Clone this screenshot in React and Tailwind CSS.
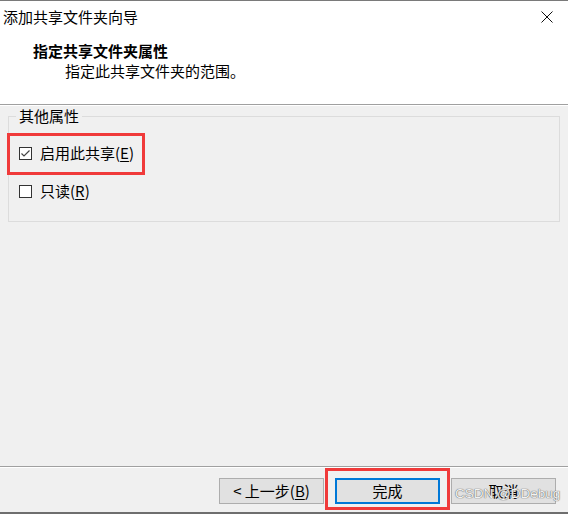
import React from 'react'

const FONT = "font-['Noto_Sans_CJK_SC','Liberation_Sans',sans-serif]"

function Mnemonic({ children, k }) {
  return (
    <span>
      {children}(<span className="underline underline-offset-2">{k}</span>)
    </span>
  )
}

function CheckRow({ checked, label, k }) {
  return (
    <div className="flex items-center h-[20px] pl-[10px]">
      <div className="w-[13px] h-[13px] border border-[#333] bg-white flex items-center justify-center">
        {checked && (
          <svg width="11" height="11" viewBox="0 0 11 11">
            <polyline points="1.5,5.5 4,8 9.5,2.5" fill="none" stroke="#444" strokeWidth="1.2" />
          </svg>
        )}
      </div>
      <span className="ml-[8px] text-[15px] leading-[20px] text-black">
        <Mnemonic k={k}>{label}</Mnemonic>
      </span>
    </div>
  )
}

function Btn({ children, primary }) {
  return (
    <div
      className={
        'w-[105px] h-[26px] flex items-center justify-center text-[15px] text-black bg-[#e1e1e1] ' +
        (primary ? 'border-2 border-[#0078d7]' : 'border border-[#adadad]')
      }
    >
      {children}
    </div>
  )
}

export default function App() {
  return (
    <div className={`relative w-[568px] h-[514px] bg-[#f0f0f0] flex flex-col border-t border-b-2 border-t-[#7a7a7a] border-b-[#6e6e6e] ${FONT}`}>
      {/* header */}
      <div className="bg-white h-[103px] flex flex-col">
        <div className="h-[32px] flex items-center justify-between pl-[3px] pr-[15px]">
          <span className="text-[15px] leading-[20px] text-black">添加共享文件夹向导</span>
          <svg width="12" height="12" viewBox="0 0 12 12">
            <path d="M0.5 0.5 L11.5 11.5 M11.5 0.5 L0.5 11.5" stroke="#111" strokeWidth="1" />
          </svg>
        </div>
        <div className="mt-[8px] pl-[33px] text-[15px] leading-[20px] font-bold text-black">指定共享文件夹属性</div>
        <div className="pl-[65px] text-[15px] leading-[20px] text-black">指定此共享文件夹的范围。</div>
      </div>
      <div className="h-px bg-[#a0a0a0]" />
      <div className="h-px bg-white" />

      {/* body */}
      <div className="flex-1">
        <fieldset className="mx-[8px] border border-[#dcdcdc] pb-[20px]">
          <legend className="ml-[7px] px-[3px] text-[15px] leading-[20px] text-black">其他属性</legend>
          <div className="mt-[17px] flex flex-col gap-[18px]">
            <CheckRow checked label="启用此共享" k="E" />
            <CheckRow label="只读" k="R" />
          </div>
        </fieldset>
      </div>

      {/* footer */}
      <div className="h-px bg-[#a0a0a0]" />
      <div className="h-px bg-white" />
      <div className="h-[44px] flex justify-end gap-[11px] pr-[12px] pt-[10px]">
        <Btn>
          <span>&lt; 上一步(<span className="underline underline-offset-2">B</span>)</span>
        </Btn>
        <Btn primary>完成</Btn>
        <Btn>取消</Btn>
      </div>

      {/* annotations */}
      <div className="absolute left-[7px] top-[132px] w-[138px] h-[42px] border-[3px] border-[#f03a3a]" />
      <div className="absolute left-[325px] top-[467px] w-[125px] h-[42px] border-[3px] border-[#f03a3a]" />
      <div className="absolute left-[455px] top-[485px] text-[13.5px] leading-[16px] font-['Liberation_Sans',sans-serif] text-[#f2f2f2] [text-shadow:0_0_1px_#555,0_0_1px_#777]">
        CSDN @DDebug
      </div>
    </div>
  )
}
